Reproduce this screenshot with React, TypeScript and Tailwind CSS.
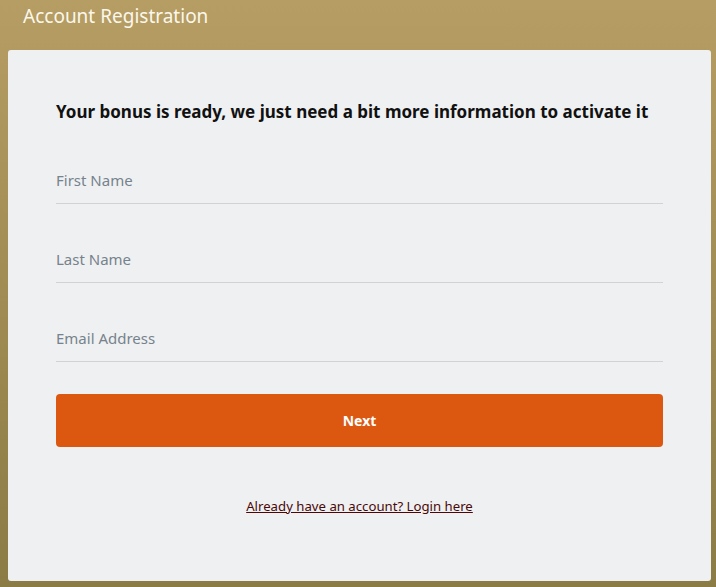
import React from 'react';

const fields = ['First Name', 'Last Name', 'Email Address'];

export default function App() {
  return (
    <div
      className="flex h-[587px] w-full flex-col bg-gradient-to-b from-[#b69d63] to-[#8b7b45] pb-[6px] pl-2 pr-[5px]"
      style={{ fontFamily: '"Noto Sans", "Open Sans", sans-serif' }}
    >
      <h1 className="h-[50px] pl-[15px] pt-[3px] text-[19px] leading-[26px] text-[#fbf7ec]">
        Account Registration
      </h1>

      <div className="flex flex-1 flex-col rounded-[3px] bg-[#eff0f2] px-12 pt-[49px]">
        <h2 className="text-[17px] font-bold leading-[26px] text-[#111]">
          Your bonus is ready, we just need a bit more information to activate it
        </h2>

        <div className="mt-[24px] flex flex-col gap-[24px]">
          {fields.map((f) => (
            <div key={f} className="flex h-[55px] items-end border-b border-[#cfd2d6] pb-[12px]">
              <input
                placeholder={f}
                className="w-full bg-transparent text-[15px] leading-[22px] text-[#444] outline-none placeholder:text-[#76838c]"
              />
            </div>
          ))}
        </div>

        <button className="mt-[32px] h-[53px] w-full rounded-[4px] bg-[#dc5811] text-[14px] font-bold text-white">
          Next
        </button>

        <div className="mt-[46px] text-center">
          <a href="#" className="text-[13.2px] text-[#4a0808] underline">
            Already have an account? Login here
          </a>
        </div>
      </div>
    </div>
  );
}
